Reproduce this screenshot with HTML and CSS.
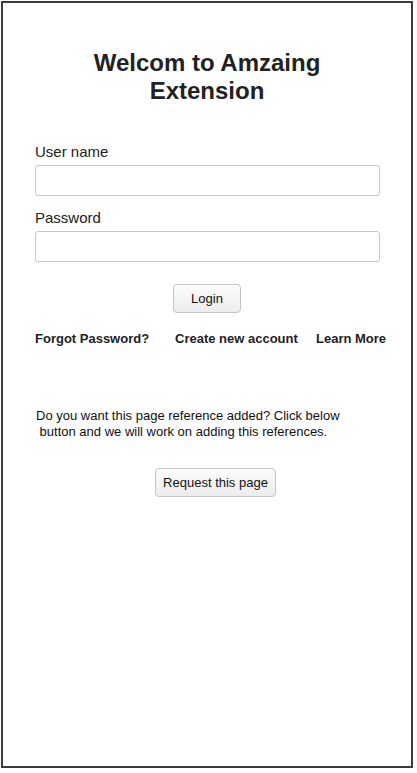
FILE: index.html
```html
<!DOCTYPE html>
<html>
<head>
<meta charset="utf-8">
<link rel="stylesheet" href="styles.css">
</head>
<body>
<div class="frame">
  <h1 class="title">Welcom to Amzaing<br>Extension</h1>
  <div class="form">
    <label class="label">User name</label>
    <input class="input" type="text">
    <label class="label">Password</label>
    <input class="input" type="password">
    <div class="center"><button class="btn">Login</button></div>
    <div class="links">
      <a class="link">Forgot Password?</a>
      <a class="link">Create new account</a>
      <a class="link">Learn More</a>
    </div>
    <p class="note">Do you want this page reference added? Click below<br>&nbsp;button and we will work on adding this references.</p>
    <div class="center"><button class="btn req">Request this page</button></div>
  </div>
</div>
</body>
</html>
```
FILE: styles.css
```css
html, body { margin: 0; padding: 0; background: #fff; }
body { font-family: "Liberation Sans", Arial, sans-serif; color: #222; }
.frame {
  margin: 1px 0 0 1px;
  width: 408px;
  height: 763px;
  border: 2px solid #3c3c3c;
  box-sizing: content-box;
}
.title {
  margin: 46px 0 0;
  text-align: center;
  font-size: 24px;
  line-height: 28px;
  font-weight: bold;
  color: #222;
}
.form { padding: 0 32px 0 32px; display: flex; flex-direction: column; }
.label { font-size: 15px; line-height: 18px; color: #222; margin-top: 13px; }
.form .label:first-child { margin-top: 38px; }
.input {
  margin-top: 4px;
  height: 31px;
  box-sizing: border-box;
  border: 1px solid #c6c6c6;
  border-radius: 3px;
  width: 345px;
  padding: 0;
}
.center { display: flex; justify-content: center; }
.btn {
  margin-top: 22px;
  height: 29px;
  width: 68px;
  border: 1px solid #c4c4c4;
  border-radius: 4px;
  background: linear-gradient(#fdfdfd, #ececec);
  font-family: "Liberation Sans", Arial, sans-serif;
  font-size: 13px;
  color: #111;
  padding: 0;
}
.req { width: 121px; margin-top: 28px; margin-left: 17px; }
.links {
  display: flex;
  margin-top: 18px;
  font-size: 13px;
  font-weight: bold;
  color: #222;
  line-height: 16px;
  white-space: nowrap;
}
.link { flex-shrink: 0; }
.link:nth-child(1) { width: 140px; }
.link:nth-child(2) { width: 141px; }
.note {
  margin: 61px 0 0 1px;
  font-size: 13px;
  line-height: 16px;
  color: #111;
}
```
